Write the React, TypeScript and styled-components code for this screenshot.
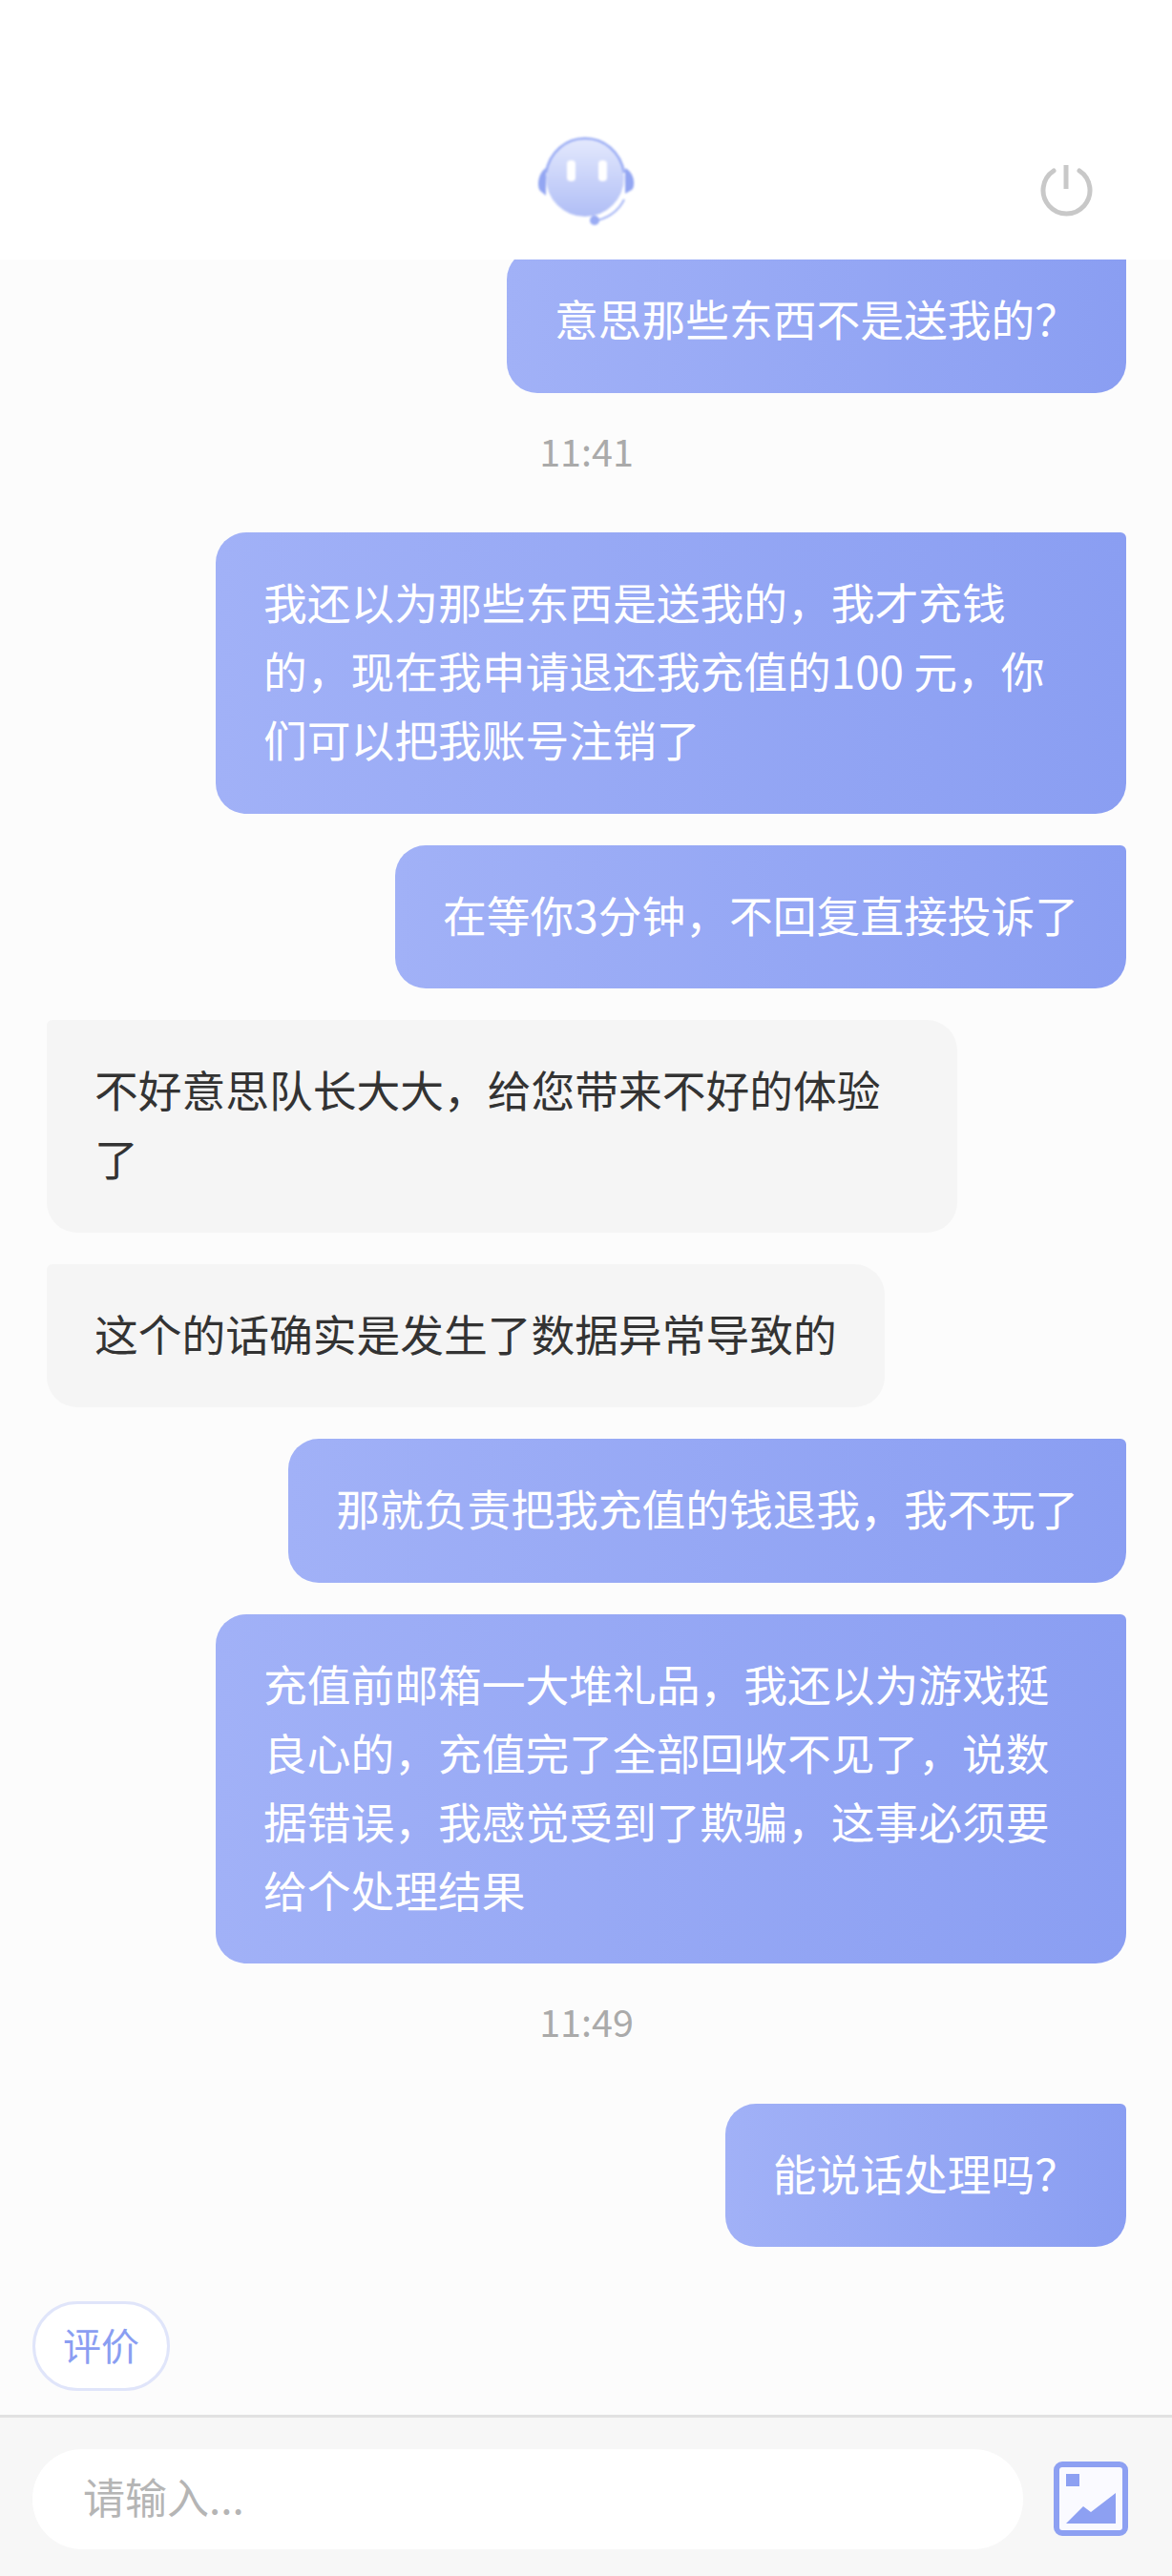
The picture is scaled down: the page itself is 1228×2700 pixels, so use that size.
import styled, { createGlobalStyle } from "styled-components"

type Message =
  | { kind: "time"; text: string }
  | { kind: "me" | "agent"; text: string }

const messages: Message[] = [
  { kind: "me", text: "意思那些东西不是送我的？" },
  { kind: "time", text: "11:41" },
  { kind: "me", text: "我还以为那些东西是送我的，我才充钱的，现在我申请退还我充值的100 元，你们可以把我账号注销了" },
  { kind: "me", text: "在等你3分钟，不回复直接投诉了" },
  { kind: "agent", text: "不好意思队长大大，给您带来不好的体验了" },
  { kind: "agent", text: "这个的话确实是发生了数据异常导致的" },
  { kind: "me", text: "那就负责把我充值的钱退我，我不玩了" },
  { kind: "me", text: "充值前邮箱一大堆礼品，我还以为游戏挺良心的，充值完了全部回收不见了，说数据错误，我感觉受到了欺骗，这事必须要给个处理结果" },
  { kind: "time", text: "11:49" },
  { kind: "me", text: "能说话处理吗？" },
]

const App = () => {
  return (
    <Page>
      <GlobalStyle />
      <Header>
        <HeaderSide />
        <Logo />
        <HeaderSide $end>
          <PowerIcon />
        </HeaderSide>
      </Header>
      <Chat>
        {messages.map((message, i) =>
          message.kind === "time" ? (
            <Time key={i}>{message.text}</Time>
          ) : (
            <Bubble key={i} $mine={message.kind === "me"}>
              {message.text}
            </Bubble>
          )
        )}
      </Chat>
      <Actions>
        <RateButton>评价</RateButton>
      </Actions>
      <Footer>
        <Input placeholder="请输入..." readOnly />
        <ImageIcon />
      </Footer>
    </Page>
  )
}

export default App

const Logo = () => (
  <LogoSvg width="102" height="93" viewBox="0 0 102 93">
    <defs>
      <linearGradient id="face" x1="0" y1="0" x2="0" y2="1">
        <stop offset="0" stopColor="#e4e9fd" />
        <stop offset="1" stopColor="#b0bef6" />
      </linearGradient>
    </defs>
    <path d="M9 33 C1 38 -1 52 3 57 L9 62 Z" fill="#93a6f2" />
    <path d="M92 33 C102 38 103 52 99 56 L92 60 Z" fill="#93a6f2" />
    <circle cx="50" cy="43" r="41" fill="url(#face)" />
    <path d="M9 38 C13 16 30 2 50 2 C70 2 87 16 91 38" fill="none" stroke="#9aacf4" strokeWidth="2.5" />
    <rect x="31" y="25" width="9" height="22" rx="4" fill="#fff" />
    <rect x="64" y="25" width="9" height="22" rx="4" fill="#fff" />
    <path d="M90 64 C84 76 72 84 58 85" fill="none" stroke="#fff" strokeWidth="3" />
    <path d="M91 66 C85 79 72 87 58 89" fill="none" stroke="#a5b5f5" strokeWidth="2" />
    <circle cx="60" cy="88" r="5" fill="#9aacf4" />
  </LogoSvg>
)

const PowerIcon = () => (
  <svg width="55" height="55" viewBox="0 0 55 55" fill="none" stroke="#c8c8c8" strokeLinecap="round">
    <path d="M14 7 A24.5 24.5 0 1 0 41 7" strokeWidth="5" />
    <path d="M27 1 V26" strokeWidth="5" strokeLinecap="butt" />
  </svg>
)

const ImageIcon = () => (
  <svg width="78" height="78" viewBox="0 0 78 78">
    <rect x="3" y="3" width="72" height="72" rx="6" fill="#fafaff" stroke="#8da0f2" strokeWidth="6" />
    <rect x="13" y="13" width="14" height="13" fill="#8da0f2" />
    <path d="M13 65 L31 47 L39 53 L65 33 V65 Z" fill="#8da0f2" />
  </svg>
)

const GlobalStyle = createGlobalStyle`
  html, body {
    margin: 0;
    padding: 0;
    background: #fcfcfc;
  }
  * {
    box-sizing: border-box;
  }
`

const Page = styled.div`
  width: 1228px;
  height: 2700px;
  display: flex;
  flex-direction: column;
  font-family: "Noto Sans CJK SC", "Noto Sans", sans-serif;
  background: #fcfcfc;
`
const Header = styled.header`
  height: 272px;
  flex: none;
  display: grid;
  grid-template-columns: 1fr auto 1fr;
  align-items: start;
  padding: 143px 83px 0 48px;
  background: #fff;
`
const LogoSvg = styled.svg`
  margin-left: 35px;
  filter: blur(0.8px);
`
const HeaderSide = styled.div<{ $end?: boolean }>`
  display: flex;
  justify-content: ${p => (p.$end ? "flex-end" : "flex-start")};
  padding-top: 29px;
`
const Chat = styled.main`
  flex: 1;
  min-height: 0;
  overflow: hidden;
  display: flex;
  flex-direction: column;
  justify-content: flex-end;
  gap: 33px;
  padding: 0 48px 57px 49px;
`
const Bubble = styled.div<{ $mine: boolean }>`
  flex: none;
  width: fit-content;
  max-width: 954px;
  padding: 36px 50px 42.5px;
  font-size: 45.76px;
  line-height: 72px;
  align-self: ${p => (p.$mine ? "flex-end" : "flex-start")};
  color: ${p => (p.$mine ? "#fff" : "#333")};
  background: ${p => (p.$mine ? "linear-gradient(90deg, #a1b1f7, #8a9ef2)" : "#f5f5f5")};
  border-radius: ${p => (p.$mine ? "32px 6px 32px 32px" : "6px 32px 32px 32px")};
`
const Time = styled.div`
  flex: none;
  height: 80.5px;
  text-align: center;
  font-size: 39.5px;
  line-height: 53px;
  color: #aaa;
`
const Actions = styled.div`
  flex: none;
  height: 119px;
  padding: 0 34px;
`
const RateButton = styled.button`
  width: 144px;
  height: 94px;
  padding: 0 0 5px;
  border: 3px solid #e0e5fa;
  border-radius: 47px;
  background: #fff;
  color: #8a9ef2;
  font-family: inherit;
  font-size: 40px;
`
const Footer = styled.footer`
  flex: none;
  height: 169px;
  display: flex;
  align-items: center;
  gap: 32px;
  padding: 4px 46px 0 34px;
  border-top: 3px solid #e2e2e2;
  background: #f7f7f7;
`
const Input = styled.input`
  width: 1038px;
  height: 105px;
  padding: 0 53px 6px;
  border: none;
  border-radius: 52px;
  background: #fff;
  outline: none;
  font-family: inherit;
  font-size: 44px;

  &::placeholder {
    color: #b5b5b5;
  }
`
